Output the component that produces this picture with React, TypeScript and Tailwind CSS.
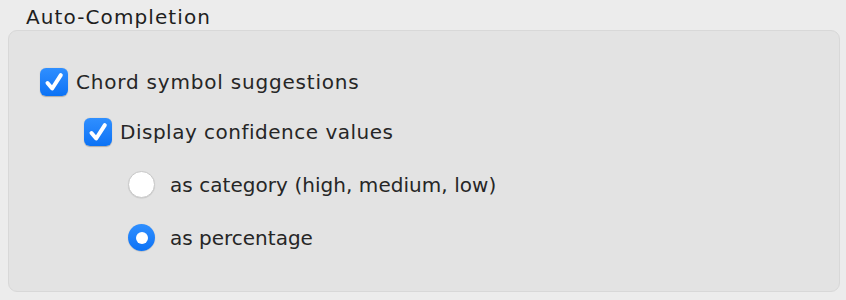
import React from "react";

const font = { fontFamily: '"DejaVu Sans", "Liberation Sans", sans-serif' };

function Check({ className = "" }: { className?: string }) {
  return (
    <div
      className={`w-[28px] h-[28px] rounded-[6px] bg-gradient-to-b from-[#2f8fff] to-[#0a72f5] shadow-[0_0.5px_1px_rgba(0,0,0,0.25)] flex items-center justify-center shrink-0 ${className}`}
    >
      <svg width="28" height="28" viewBox="0 0 28 28">
        <path
          d="M7.5 15 L12.2 20.5 L20.8 7.2"
          fill="none"
          stroke="white"
          strokeWidth="4"
          strokeLinecap="round"
          strokeLinejoin="round"
        />
      </svg>
    </div>
  );
}

function Radio({ checked }: { checked?: boolean }) {
  if (checked) {
    return (
      <div className="w-[27px] h-[27px] rounded-full bg-gradient-to-b from-[#2f8fff] to-[#0a72f5] shadow-[0_0.5px_1px_rgba(0,0,0,0.25)] flex items-center justify-center shrink-0">
        <div className="w-[12px] h-[12px] rounded-full bg-white" />
      </div>
    );
  }
  return (
    <div className="w-[27px] h-[27px] rounded-full bg-white border border-[#c9c9c9] shadow-[0_0.5px_1px_rgba(0,0,0,0.12)] shrink-0" />
  );
}

export default function App() {
  return (
    <div className="w-[846px] h-[300px] bg-[#ececec] text-[#262626] overflow-hidden" style={font}>
      <div className="pl-[26px] pt-[5px] h-[30px] text-[20px] leading-[24px] tracking-[1.1px] text-[#1e1e1e]">
        Auto-Completion
      </div>
      <div className="mx-[8px] mr-[6px] h-[262px] rounded-[9px] bg-[#e3e3e3] border border-[#d8d8d8] pt-[37px] pl-[31px] text-[20px] leading-[24px]">
        <div className="flex items-center gap-[8px] h-[28px]">
          <Check />
          <span className="tracking-[0.8px]">Chord symbol suggestions</span>
        </div>
        <div className="flex items-center gap-[8px] h-[28px] mt-[22px] ml-[44px]">
          <Check />
          <span className="tracking-[0.5px]">Display confidence values</span>
        </div>
        <div className="flex items-center gap-[15px] h-[27px] mt-[25px] ml-[88px]">
          <Radio />
          <span className="tracking-[0.05px]">as category (high, medium, low)</span>
        </div>
        <div className="flex items-center gap-[15px] h-[27px] mt-[26px] ml-[88px]">
          <Radio checked />
          <span>as percentage</span>
        </div>
      </div>
    </div>
  );
}
